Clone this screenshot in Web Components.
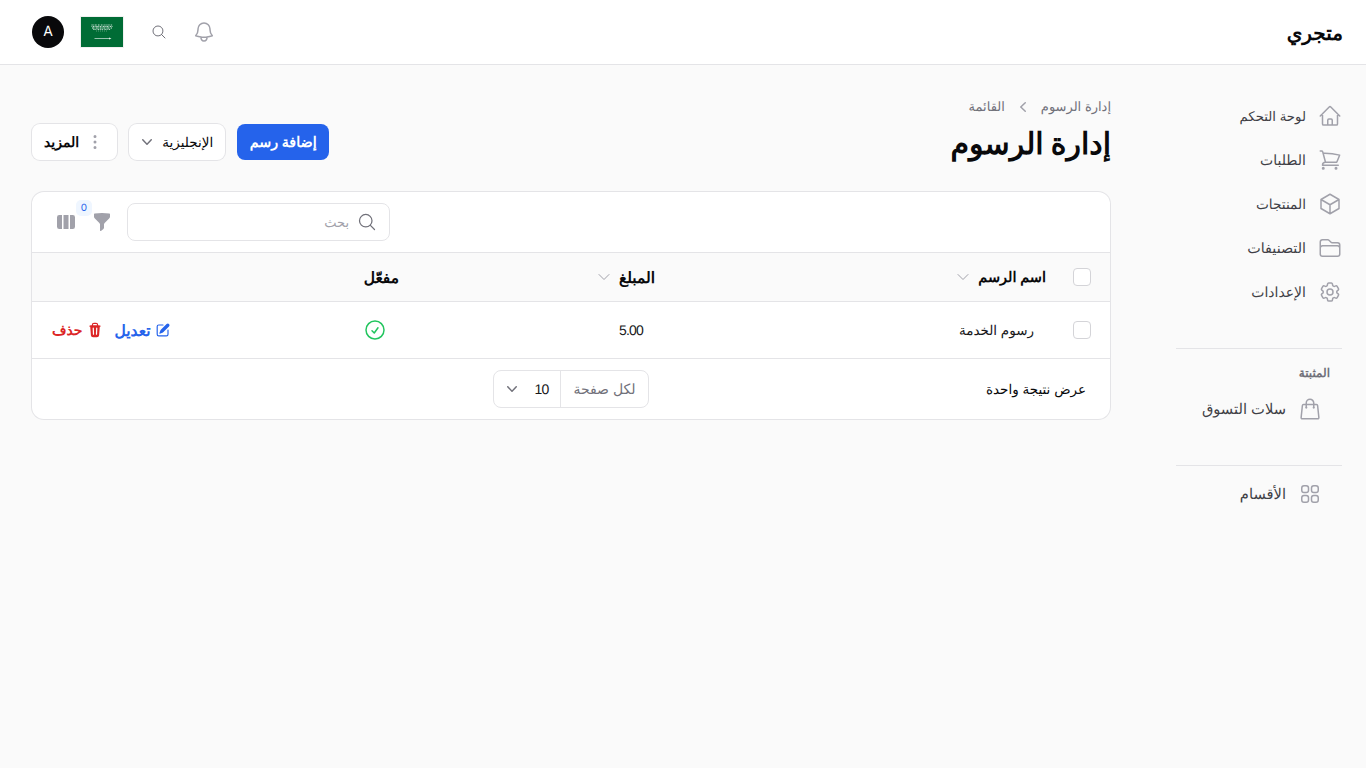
<!DOCTYPE html>
<html lang="ar" dir="rtl">
<head>
<meta charset="utf-8">
<title>إدارة الرسوم</title>
<style>
  html, body { margin: 0; min-height: 100%; }
  body {
    background: #fafafa;
    color: #09090b;
    font-family: Inter, "Noto Sans", sans-serif;
    font-size: 14px;
    line-height: 20px;
    text-rendering: geometricPrecision;
  }
</style>
</head>
<body>
<shop-app></shop-app>

<script>
const ICONS = {
  home: 'm2.25 12 8.954-8.955c.44-.439 1.152-.439 1.591 0L21.75 12M4.5 9.75v10.125c0 .621.504 1.125 1.125 1.125H9.75v-4.875c0-.621.504-1.125 1.125-1.125h2.25c.621 0 1.125.504 1.125 1.125V21h4.125c.621 0 1.125-.504 1.125-1.125V9.75M8.25 21h8.25',
  cart: 'M2.25 3h1.386c.51 0 .955.343 1.087.835l.383 1.437M7.5 14.25a3 3 0 0 0-3 3h15.75m-12.75-3h11.218c1.121-2.3 2.1-4.684 2.924-7.138a60.114 60.114 0 0 0-16.536-1.84M7.5 14.25 5.106 5.272M6 20.25a.75.75 0 1 1-1.5 0 .75.75 0 0 1 1.5 0Zm12.75 0a.75.75 0 1 1-1.5 0 .75.75 0 0 1 1.5 0Z',
  cube: 'm21 7.5-9-5.25L3 7.5m18 0-9 5.25m9-5.25v9l-9 5.25M3 7.5l9 5.25M3 7.5v9l9 5.25m0-9v9',
  folder: 'M2.25 12.75V12A2.25 2.25 0 0 1 4.5 9.75h15A2.25 2.25 0 0 1 21.75 12v.75m-8.69-6.44-2.12-2.12a1.5 1.5 0 0 0-1.061-.44H4.5A2.25 2.25 0 0 0 2.25 6v12a2.25 2.25 0 0 0 2.25 2.25h15A2.25 2.25 0 0 0 21.75 18V9a2.25 2.25 0 0 0-2.25-2.25h-5.379a1.5 1.5 0 0 1-1.06-.44Z',
  cog: 'M9.594 3.94c.09-.542.56-.94 1.11-.94h2.593c.55 0 1.02.398 1.11.94l.213 1.281c.063.374.313.686.645.87.074.04.147.083.22.127.325.196.72.257 1.075.124l1.217-.456a1.125 1.125 0 0 1 1.37.49l1.296 2.247a1.125 1.125 0 0 1-.26 1.431l-1.003.827c-.293.241-.438.613-.43.992a7.723 7.723 0 0 1 0 .255c-.008.378.137.75.43.991l1.004.827c.424.35.534.955.26 1.43l-1.298 2.247a1.125 1.125 0 0 1-1.369.491l-1.217-.456c-.355-.133-.75-.072-1.076.124a6.47 6.47 0 0 1-.22.128c-.331.183-.581.495-.644.869l-.213 1.281c-.09.543-.56.94-1.11.94h-2.594c-.55 0-1.019-.398-1.11-.94l-.213-1.281c-.062-.374-.312-.686-.644-.87a6.52 6.52 0 0 1-.22-.127c-.325-.196-.72-.257-1.076-.124l-1.217.456a1.125 1.125 0 0 1-1.369-.49l-1.297-2.247a1.125 1.125 0 0 1 .26-1.431l1.004-.827c.292-.24.437-.613.43-.991a6.932 6.932 0 0 1 0-.255c.007-.38-.138-.751-.43-.992l-1.004-.827a1.125 1.125 0 0 1-.26-1.43l1.297-2.247a1.125 1.125 0 0 1 1.37-.491l1.216.456c.356.133.751.072 1.076-.124.072-.044.146-.086.22-.128.332-.183.582-.495.644-.869l.214-1.28ZM15 12a3 3 0 1 1-6 0 3 3 0 0 1 6 0Z',
  bag: 'M15.75 10.5V6a3.75 3.75 0 1 0-7.5 0v4.5m11.356-1.993 1.263 12c.07.665-.45 1.243-1.119 1.243H4.25a1.125 1.125 0 0 1-1.12-1.243l1.264-12A1.125 1.125 0 0 1 5.513 7.5h12.974c.576 0 1.059.435 1.119 1.007ZM8.625 10.5a.375.375 0 1 1-.75 0 .375.375 0 0 1 .75 0Zm7.5 0a.375.375 0 1 1-.75 0 .375.375 0 0 1 .75 0Z',
  grid: 'M3.75 6A2.25 2.25 0 0 1 6 3.75h2.25A2.25 2.25 0 0 1 10.5 6v2.25a2.25 2.25 0 0 1-2.25 2.25H6a2.25 2.25 0 0 1-2.25-2.25V6ZM3.75 15.75A2.25 2.25 0 0 1 6 13.5h2.25a2.25 2.25 0 0 1 2.25 2.25V18a2.25 2.25 0 0 1-2.25 2.25H6A2.25 2.25 0 0 1 3.75 18v-2.25ZM13.5 6a2.25 2.25 0 0 1 2.25-2.25H18A2.25 2.25 0 0 1 20.25 6v2.25A2.25 2.25 0 0 1 18 10.5h-2.25a2.25 2.25 0 0 1-2.25-2.25V6ZM13.5 15.75a2.25 2.25 0 0 1 2.25-2.25H18a2.25 2.25 0 0 1 2.25 2.25V18A2.25 2.25 0 0 1 18 20.25h-2.25A2.25 2.25 0 0 1 13.5 18v-2.25Z',
  bell: 'M14.857 17.082a23.848 23.848 0 0 0 5.454-1.31A8.967 8.967 0 0 1 18 9.75V9A6 6 0 0 0 6 9v.75a8.967 8.967 0 0 1-2.312 6.022c1.733.64 3.56 1.085 5.455 1.31m5.714 0a24.255 24.255 0 0 1-5.714 0m5.714 0a3 3 0 1 1-5.714 0',
  search: 'm21 21-5.197-5.197m0 0A7.5 7.5 0 1 0 5.196 5.196a7.5 7.5 0 0 0 10.607 10.607Z',
  check: 'M9 12.75 11.25 15 15 9.75M21 12a9 9 0 1 1-18 0 9 9 0 0 1 18 0Z',
  sort: 'm19.5 8.25-7.5 7.5-7.5-7.5'
};
const SOLID = {
  chevron: 'M5.23 7.21a.75.75 0 0 1 1.06.02L10 11.168l3.71-3.938a.75.75 0 1 1 1.08 1.04l-4.25 4.5a.75.75 0 0 1-1.08 0l-4.25-4.5a.75.75 0 0 1 .02-1.06Z',
  filter: 'M2.628 1.601C5.028 1.206 7.49 1 10 1s4.973.206 7.372.601a.75.75 0 0 1 .628.74v2.288a2.25 2.25 0 0 1-.659 1.59l-4.682 4.683a2.25 2.25 0 0 0-.659 1.59v3.037c0 .684-.31 1.33-.844 1.757l-1.937 1.55A.75.75 0 0 1 8 18.25v-5.757a2.25 2.25 0 0 0-.659-1.591L2.659 6.22A2.25 2.25 0 0 1 2 4.629V2.34a.75.75 0 0 1 .628-.74Z',
  columns: 'M14 17h2.75A2.25 2.25 0 0 0 19 14.75v-9.5A2.25 2.25 0 0 0 16.75 3H14v14ZM12.5 3h-5v14h5V3ZM3.25 3H6v14H3.25A2.25 2.25 0 0 1 1 14.75v-9.5A2.25 2.25 0 0 1 3.25 3Z',
  pencil: 'm5.433 13.917 1.262-3.155A4 4 0 0 1 7.58 9.42l6.92-6.918a2.121 2.121 0 0 1 3 3l-6.92 6.918c-.383.383-.84.685-1.343.886l-3.154 1.262a.5.5 0 0 1-.65-.65ZM3.5 5.75c0-.69.56-1.25 1.25-1.25H10A.75.75 0 0 0 10 3H4.75A2.75 2.75 0 0 0 2 5.75v9.5A2.75 2.75 0 0 0 4.75 18h9.5A2.75 2.75 0 0 0 17 15.25V10a.75.75 0 0 0-1.5 0v5.25c0 .69-.56 1.25-1.25 1.25h-9.5c-.69 0-1.25-.56-1.25-1.25v-9.5Z',
  trash: 'M8.75 1A2.75 2.75 0 0 0 6 3.75v.443c-.795.077-1.584.176-2.365.298a.75.75 0 1 0 .23 1.482l.149-.022.841 10.518A2.75 2.75 0 0 0 7.596 19h4.807a2.75 2.75 0 0 0 2.742-2.53l.841-10.52.149.023a.75.75 0 0 0 .23-1.482A41.03 41.03 0 0 0 14 4.193V3.75A2.75 2.75 0 0 0 11.25 1h-2.5ZM10 4c.84 0 1.673.025 2.5.075V3.75c0-.69-.56-1.25-1.25-1.25h-2.5c-.69 0-1.25.56-1.25 1.25v.325C8.327 4.025 9.16 4 10 4ZM8.58 7.72a.75.75 0 0 0-1.5.06l.3 7.5a.75.75 0 1 0 1.5-.06l-.3-7.5Zm4.34.06a.75.75 0 1 0-1.5-.06l-.3 7.5a.75.75 0 1 0 1.5.06l.3-7.5Z',
  dots: 'M10 3a1.5 1.5 0 1 1 0 3 1.5 1.5 0 0 1 0-3ZM10 8.5a1.5 1.5 0 1 1 0 3 1.5 1.5 0 0 1 0-3ZM11.5 15.5a1.5 1.5 0 1 0-3 0 1.5 1.5 0 0 0 3 0Z'
};

// sets up the open shadow root, every element here does the same thing
class Base extends HTMLElement {
  render(html) {
    this._shadowRoot = this.attachShadow({ mode: 'open' });
    this._shadowRoot.innerHTML = html;
  }
}

class UiIcon extends Base {
  connectedCallback() {
    if (this.shadowRoot) return;
    const name = this.getAttribute('name');
    const size = this.getAttribute('size') || 24;
    const sw = this.getAttribute('stroke') || 1.5;
    const solid = SOLID[name];
    this.render(`
      <style>
        :host { display: block; width: ${size}px; height: ${size}px; flex: none; }
        svg { display: block; width: 100%; height: 100%; }
      </style>
      ${solid
        ? `<svg viewBox="0 0 20 20" fill="currentColor"><path fill-rule="evenodd" clip-rule="evenodd" d="${solid}"/></svg>`
        : `<svg viewBox="0 0 24 24" fill="none" stroke="currentColor" stroke-width="${sw}" stroke-linecap="round" stroke-linejoin="round"><path d="${ICONS[name]}"/></svg>`}
    `);
  }
}

class SaudiFlag extends Base {
  connectedCallback() {
    this.render(`
      <style>
        :host { display: block; width: 42px; height: 30px; flex: none; box-shadow: 0 0 0 1px #f0f0f0; }
        svg { display: block; }
      </style>
      <svg width="42" height="30" viewBox="0 0 42 30">
        <rect width="42" height="30" fill="#006c35"/>
        <g stroke="#fff" fill="none">
          <path d="M10.5 8h21" stroke-width="1" stroke-dasharray="1.2 .5 .6 .9" opacity=".8"/>
          <path d="M10.5 9.5h21" stroke-width="1" stroke-dasharray=".7 .6 1.6 .5" opacity=".75"/>
          <path d="M11 11h20" stroke-width="1" stroke-dasharray="2 .5 .7 .6" opacity=".85"/>
          <path d="M12 12.5h18" stroke-width="1" stroke-dasharray=".8 .6 1.3 .9" opacity=".7"/>
          <path d="M15 14h12" stroke-width=".7" stroke-dasharray="1 1" opacity=".5"/>
        </g>
        <path d="M13.5 21.5h15" stroke="#fff" stroke-width=".7" opacity=".85"/>
        <path d="M28 20.5v2l2.5-1z" fill="#fff" opacity=".85"/>
      </svg>
    `);
  }
}

class TopBar extends Base {
  connectedCallback() {
    this.render(`
      <style>
        :host {
          display: flex; align-items: center; justify-content: space-between;
          height: 64px; padding: 0 23px 0 24px; background: #fff; border-bottom: 1px solid #e4e4e7;
        }
        .brand { font-size: 20px; font-weight: 700; color: #09090b; line-height: 28px; padding-top: 2px; }
        .tools { display: flex; align-items: center; padding-left: 8px; }
        .avatar {
          width: 32px; height: 32px; border-radius: 50%;
          background: #09090b; color: #fff; font-size: 14px;
          display: flex; align-items: center; justify-content: center;
        }
        .flag { margin-left: 17px; }
        .search { color: #71717a; margin-left: 28px; }
        .bell { color: #a1a1aa; margin-left: 25px; }
      </style>
      <div class="brand">متجري</div>
      <div class="tools">
        <ui-icon class="bell" name="bell" size="24"></ui-icon>
        <ui-icon class="search" name="search" size="16"></ui-icon>
        <saudi-flag class="flag"></saudi-flag>
        <div class="avatar">A</div>
      </div>
    `);
  }
}

class NavItem extends Base {
  connectedCallback() {
    this.render(`
      <style>
        :host {
          display: flex; align-items: center; gap: 12px; height: 44px;
          padding-right: var(--nav-pad, 0); color: #3f3f46; font-size: var(--nav-size, 14px);
        }
        ui-icon { color: #a1a1aa; }
        span { padding-top: var(--nav-shift, 2px); }
      </style>
      <ui-icon name="${this.getAttribute('icon')}" size="24"></ui-icon>
      <span><slot></slot></span>
    `);
  }
}

class SideBar extends Base {
  connectedCallback() {
    this.render(`
      <style>
        :host { display: block; width: 166px; flex: none; padding-top: 29px; }
        hr { border: 0; border-top: 1px solid #e4e4e7; margin: 0; }
        .top hr { margin-top: 34px; }
        .label {
          margin: 14px 12px 0 0; font-size: 12px; line-height: 20px;
          font-weight: 600; color: #71717a;
        }
        .pin { --nav-pad: 20px; --nav-size: 14.7px; --nav-shift: 0px; margin-top: 4px; }
        .last { --nav-pad: 20px; --nav-size: 14.7px; --nav-shift: 0px; margin-top: 34px; }
        .last hr { margin-bottom: 6px; }
      </style>
      <div class="top">
        <nav-item icon="home" style="--nav-size:13.3px">لوحة التحكم</nav-item>
        <nav-item icon="cart">الطلبات</nav-item>
        <nav-item icon="cube" style="--nav-size:13.7px">المنتجات</nav-item>
        <nav-item icon="folder" style="--nav-size:14.3px">التصنيفات</nav-item>
        <nav-item icon="cog">الإعدادات</nav-item>
        <hr>
      </div>
      <div class="label">المثبتة</div>
      <div class="pin"><nav-item icon="bag">سلات التسوق</nav-item></div>
      <div class="last">
        <hr>
        <nav-item icon="grid">الأقسام</nav-item>
      </div>
    `);
  }
}

class UiButton extends Base {
  connectedCallback() {
    this.render(`
      <style>
        :host {
          display: inline-flex; align-items: center; height: 36px;
          padding: 0 12px; gap: 6px; border-radius: 8px; background: #fff;
          box-shadow: 0 0 0 1px #e4e4e7; font-size: 14px; font-weight: 600; color: #09090b;
        }
        :host([primary]) { background: #2563eb; color: #fff; box-shadow: none; padding: 0 12.5px; font-size: 14.3px; }
        :host([plain]) { font-weight: 400; font-size: 13.5px; padding: 0 12px 0 8px; gap: 5px; }
        ::slotted(span) { padding-top: 2px; }
      </style>
      <slot></slot>
    `);
  }
}

class PageHead extends Base {
  connectedCallback() {
    this.render(`
      <style>
        :host { display: flex; align-items: flex-end; justify-content: space-between; }
        .crumbs { display: flex; align-items: center; gap: 8px; font-size: 13px; color: #71717a; line-height: 20px; }
        .crumbs ui-icon { color: #a1a1aa; transform: rotate(90deg); }
        h1 { margin: 9px 0 0; font-size: 30px; line-height: 36px; font-weight: 700; color: #09090b; }
        .actions { display: flex; gap: 12px; align-items: center; padding-left: 1px; margin-bottom: 2px; }
        .grey { color: #a1a1aa; }
        .dark { color: #71717a; }
      </style>
      <div>
        <div class="crumbs">
          <span>إدارة الرسوم</span>
          <ui-icon name="chevron" size="20"></ui-icon>
          <span>القائمة</span>
        </div>
        <h1>إدارة الرسوم</h1>
      </div>
      <div class="actions">
        <ui-button primary><span>إضافة رسم</span></ui-button>
        <ui-button plain><span>الإنجليزية</span><ui-icon class="dark" name="chevron" size="20"></ui-icon></ui-button>
        <ui-button><ui-icon class="grey" name="dots" size="20"></ui-icon><span>المزيد</span></ui-button>
      </div>
    `);
  }
}

class CheckBox extends Base {
  connectedCallback() {
    this.render(`
      <style>
        :host {
          display: block; width: 18px; height: 18px; box-sizing: border-box;
          background: #fff; border: 1px solid #d4d4d8; border-radius: 4px; flex: none;
        }
      </style>
    `);
  }
}

class FeeTable extends Base {
  connectedCallback() {
    this.render(`
      <style>
        :host {
          display: block; background: #fff; border-radius: 12px;
          box-shadow: 0 0 0 1px #e4e4e7; overflow: hidden; margin: 0 1px;
        }
        .t { padding-top: 2px; }
        .toolbar {
          display: flex; align-items: center; justify-content: flex-end; gap: 15px;
          height: 60px; padding: 0 24px; border-bottom: 1px solid #e4e4e7;
        }
        .search {
          display: flex; align-items: center; gap: 8px; width: 263px; height: 38px;
          box-sizing: border-box; padding: 0 12px; border: 1px solid #e4e4e7; border-radius: 8px;
          color: #a1a1aa; font-size: 13px;
        }
        .search ui-icon { color: #71717a; }
        .icons { display: flex; align-items: center; gap: 16px; position: relative; color: #a1a1aa; }
        .count {
          position: absolute; top: -12px; right: 20px; min-width: 16px; height: 16px;
          font-size: 10px; line-height: 16px; text-align: center; color: #2563eb;
          background: #eff6ff; border-radius: 5px;
        }
        .head, .row { display: grid; grid-template-columns: 64px 391px 256px 1fr; align-items: center; }
        .head { height: 48px; background: #fafafa; border-bottom: 1px solid #e4e4e7; font-size: 14.5px; font-weight: 600; color: #09090b; }
        .row { height: 56px; border-bottom: 1px solid #e4e4e7; color: #18181b; font-size: 13.5px; }
        .cell { display: flex; align-items: center; }
        .box { padding-right: 19px; }
        .th { gap: 7px; }
        .th ui-icon { color: #a1a1aa; }
        .wide { font-size: 15.5px; }
        .name, .amount { padding-right: 12px; }
        .amount, .size span { font-family: "Liberation Sans", sans-serif; font-size: 14px; letter-spacing: -.8px; }
        .status { justify-content: space-between; padding: 0 12px 0 20px; }
        .active { color: #22c55e; }
        .acts { display: flex; gap: 12px; font-size: 14px; font-weight: 600; }
        .act { display: flex; align-items: center; gap: 4px; }
        .edit { color: #2563eb; font-size: 15.5px; gap: 4px; }
        .del { color: #dc2626; }
        .foot { display: grid; grid-template-columns: 1fr auto 1fr; align-items: center; height: 60px; padding: 0 24px; font-size: 13.5px; }
        .pager {
          display: flex; align-items: center; height: 36px; border: 1px solid #e4e4e7; border-radius: 8px; font-size: 14px;
        }
        .per { padding: 1px 12px 0; color: #71717a; border-left: 1px solid #e4e4e7; height: 35px; line-height: 36px; }
        .size { display: flex; align-items: center; gap: 12px; padding: 0 12px 0 8px; color: #18181b; }
        .size ui-icon { color: #71717a; }
      </style>
      <div class="toolbar">
        <div class="search">
          <ui-icon name="search" size="20"></ui-icon>
          <span class="t">بحث</span>
        </div>
        <div class="icons">
          <ui-icon name="filter" size="20"></ui-icon>
          <span class="count">0</span>
          <ui-icon name="columns" size="20"></ui-icon>
        </div>
      </div>
      <div class="head">
        <div class="cell box"><check-box></check-box></div>
        <div class="cell th"><span class="t">اسم الرسم</span><ui-icon name="sort" size="16"></ui-icon></div>
        <div class="cell th"><span class="t wide">المبلغ</span><ui-icon name="sort" size="16"></ui-icon></div>
        <div class="cell"><span class="t wide">مفعّل</span></div>
      </div>
      <div class="row">
        <div class="cell box"><check-box></check-box></div>
        <div class="cell name"><span class="t">رسوم الخدمة</span></div>
        <div class="cell amount">5.00</div>
        <div class="cell status">
          <ui-icon class="active" name="check" size="24"></ui-icon>
          <div class="acts">
            <span class="act edit"><ui-icon name="pencil" size="16"></ui-icon><span class="t">تعديل</span></span>
            <span class="act del"><ui-icon name="trash" size="16"></ui-icon><span class="t">حذف</span></span>
          </div>
        </div>
      </div>
      <div class="foot">
        <div class="t">عرض نتيجة واحدة</div>
        <div class="pager">
          <div class="per">لكل صفحة</div>
          <div class="size"><span>10</span><ui-icon name="chevron" size="20"></ui-icon></div>
        </div>
        <div></div>
      </div>
    `);
  }
}

class ShopApp extends Base {
  connectedCallback() {
    this.render(`
      <style>
        :host { display: block; min-height: 768px; }
        .body { display: flex; gap: 65px; padding: 0 24px 0 31px; }
        main { flex: 1; min-width: 0; padding-top: 32px; }
        fee-table { margin-top: 30px; }
      </style>
      <top-bar></top-bar>
      <div class="body">
        <side-bar></side-bar>
        <main>
          <page-head></page-head>
          <fee-table></fee-table>
        </main>
      </div>
    `);
  }
}

customElements.define('ui-icon', UiIcon);
customElements.define('saudi-flag', SaudiFlag);
customElements.define('top-bar', TopBar);
customElements.define('nav-item', NavItem);
customElements.define('side-bar', SideBar);
customElements.define('ui-button', UiButton);
customElements.define('page-head', PageHead);
customElements.define('check-box', CheckBox);
customElements.define('fee-table', FeeTable);
customElements.define('shop-app', ShopApp);
</script>
</body>
</html>
